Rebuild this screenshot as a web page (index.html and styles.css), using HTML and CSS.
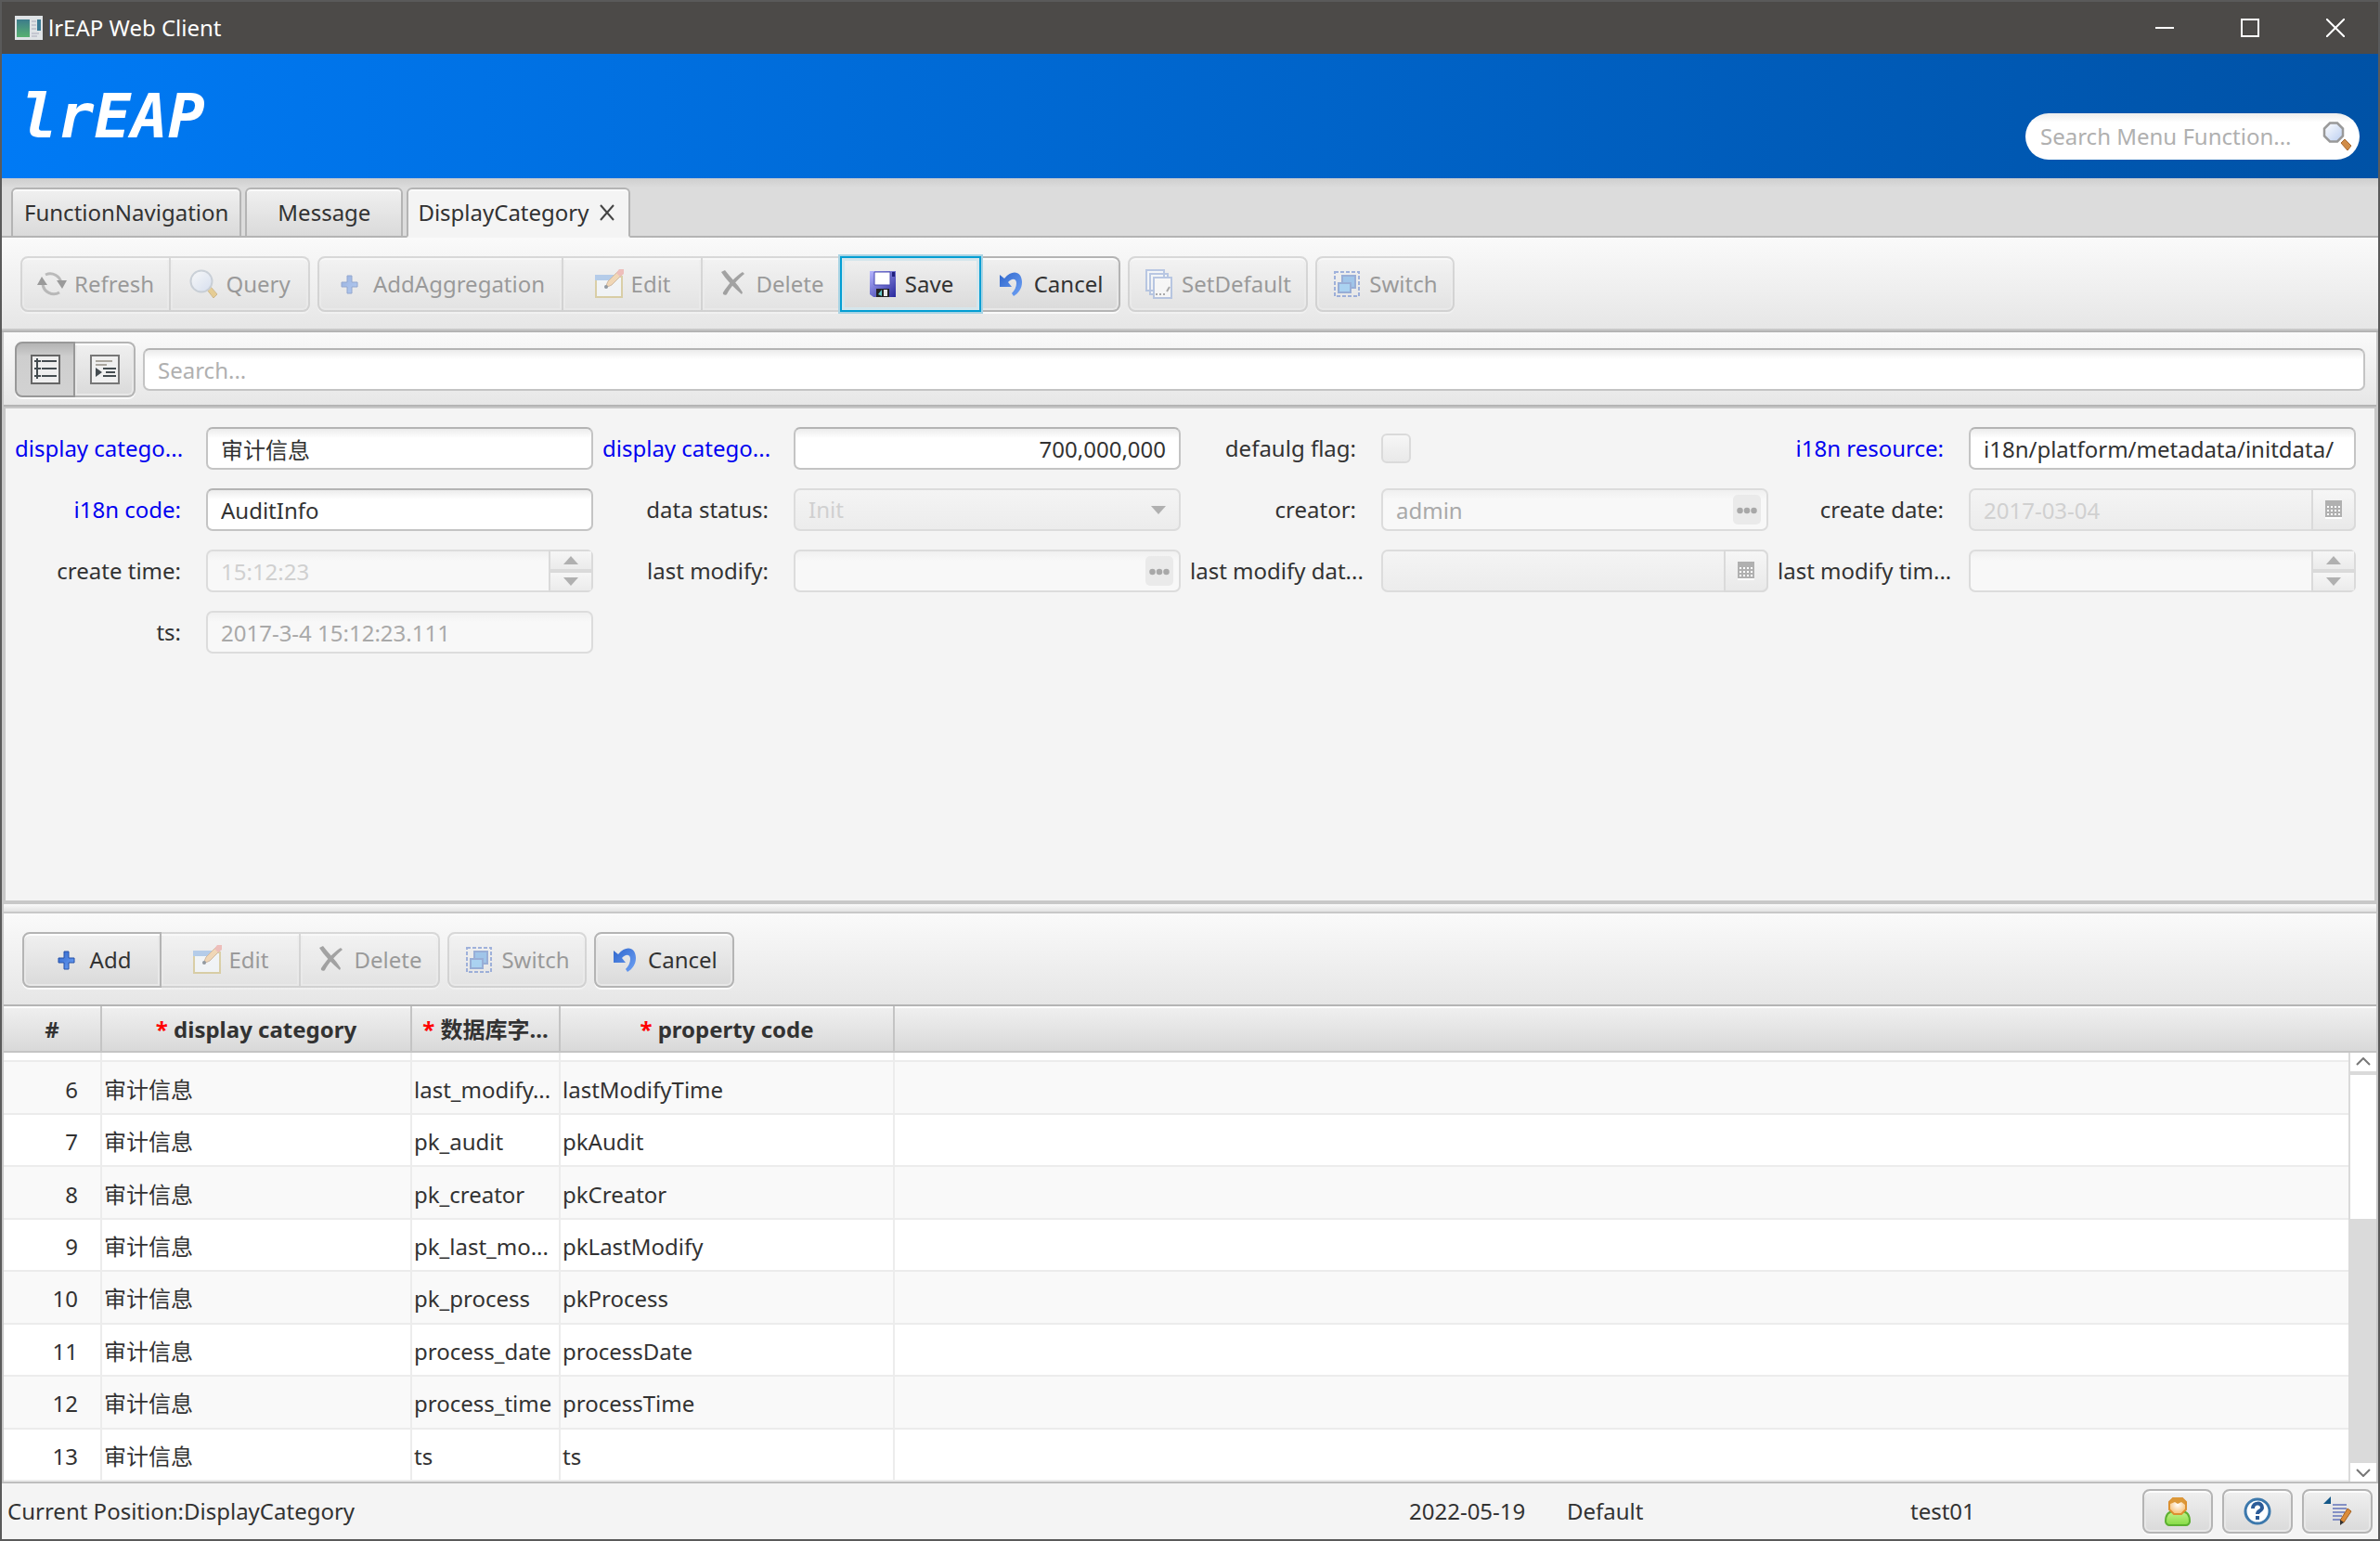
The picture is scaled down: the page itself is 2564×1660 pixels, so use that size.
FILE: index.html
```html
<!DOCTYPE html>
<html lang="en">

<head>
    <meta charset="UTF-8">
    <meta name="viewport" content="width=device-width, initial-scale=1.0">
    <title>lrEAP Web Client</title>
    <link rel="stylesheet" href="styles.css">
</head>

<body>

    <!-- shared icons -->
    <svg class="sprite" aria-hidden="true">
        <defs>
            <linearGradient id="glass" x1="0" y1="0" x2="1" y2="1">
                <stop offset="0" stop-color="#fff" />
                <stop offset="1" stop-color="#b9cdf0" />
            </linearGradient>
            <linearGradient id="disk" x1="0" y1="0" x2="1" y2="1">
                <stop offset="0" stop-color="#b5b5ff" />
                <stop offset="1" stop-color="#28289c" />
            </linearGradient>
            <linearGradient id="blue" x1="0" y1="0" x2="1" y2="1">
                <stop offset="0" stop-color="#2f66cc" />
                <stop offset="1" stop-color="#6fa2f5" />
            </linearGradient>
            <linearGradient id="sea" x1="0" y1="0" x2="0" y2="1">
                <stop offset="0" stop-color="#3c7c8c" />
                <stop offset="1" stop-color="#58b070" />
            </linearGradient>
            <radialGradient id="face" cx="0.5" cy="0.4">
                <stop offset="0" stop-color="#fff" />
                <stop offset="1" stop-color="#f8c888" />
            </radialGradient>
            <linearGradient id="shirt" x1="0" y1="0" x2="0" y2="1">
                <stop offset="0" stop-color="#c8f08c" />
                <stop offset="1" stop-color="#84dc44" />
            </linearGradient>
        </defs>
        <symbol id="i-refresh" viewBox="0 0 32 32">
            <path d="M9 6a12 12 0 0 1 17 9M24 25a12 12 0 0 1-18-9" fill="none" stroke="#777" stroke-width="3" />
            <path d="M0 17l5-9 6 9zM21 12h11l-5 9z" fill="#333" />
        </symbol>
        <symbol id="i-query" viewBox="0 0 32 32">
            <path d="M20 22l4-3 7 8-4 4z" fill="#dca528" stroke="#a87818" />
            <circle cx="14" cy="13" r="11.500" fill="url(#glass)" stroke="#9aa8b8" stroke-width="2" />
        </symbol>
        <symbol id="i-find" viewBox="0 0 32 32">
            <path d="M20 23l4-4 7 7-4 5z" fill="#d08c48" stroke="#a86830" />
            <path d="M8 1.500h8l6 6v8l-6 6H8l-6-6v-8z" fill="url(#glass)" stroke="#999" stroke-width="2.500" />
        </symbol>
        <symbol id="i-plus" viewBox="0 0 32 32">
            <path d="M12 7h5v7h6v5h-6v7h-5v-7H6v-5h6z" fill="url(#blue)" stroke="#2450a8" />
        </symbol>
        <symbol id="i-edit" viewBox="0 0 32 32">
            <path d="M2 8h28v22H2z" fill="#f4faff" stroke="#c0a850" stroke-width="2" />
            <path d="M1 6h22v6H1z" fill="#6ca0e0" />
            <path d="M12 20l3-7L27 1l4 4-12 12z" fill="#f0b870" stroke="#a87848" />
            <path d="M24 4l3-4h5v5l-4 3z" fill="#e88078" />
            <circle cx="13" cy="19" r="2" fill="#234" />
        </symbol>
        <symbol id="i-delete" viewBox="0 0 32 32">
            <path d="M2 3l4-2c7 9 13 14 19 24l-1 2C16 20 7 11 2 3z" fill="#444" />
            <path d="M4 25C9 17 17 8 25 3l2 2C20 11 12 19 8 27c-2 2-5 0-4-2z" fill="#444" />
        </symbol>
        <symbol id="i-save" viewBox="0 0 32 32">
            <path d="M2 2h28v28H6l-4-3z" fill="url(#disk)" />
            <path d="M7 3h17v14H7z" fill="#fff" stroke="#4848b0" />
            <path d="M26 3h3v5h-3z" fill="#20207c" />
            <path d="M9 21h14v9H9z" fill="#222" />
            <path d="M17 22h4v7h-4z" fill="#e8e8e8" />
            <path d="M11 27l4-5v7z" fill="#6cc" />
        </symbol>
        <symbol id="i-undo" viewBox="0 0 32 32">
            <path d="M3 6v13h13l-4-5c3-4 9-5 9 1 0 4-2 8-5 11l2 3c5-3 9-8 9-15C27 3 17-1 8 10z" fill="url(#blue)" />
        </symbol>
        <symbol id="i-pages" viewBox="0 0 32 32">
            <g fill="#f6faff" stroke="#7494d0" stroke-width="2">
                <path d="M2 1h19v22H2zM6 5h19v22H6z" />
                <path d="M10 9h19v22H10z" fill="#fff" />
            </g>
            <path d="M12 27h2m2 0h2m2 0h2m2-3l3-5" stroke="#555" stroke-width="2" />
        </symbol>
        <symbol id="i-switch" viewBox="0 0 32 32">
            <path d="M3 3h26v26H3z" fill="none" stroke="#3c64c0" stroke-width="2" stroke-dasharray="4 2" />
            <path d="M11 7h14v13H11z" fill="#4090e0" stroke="#3060b8" stroke-width="2" />
            <path d="M7 15h13v10H7z" fill="#58b0f4" stroke="#3060b8" stroke-width="2" />
        </symbol>
        <symbol id="i-dots" viewBox="0 0 32 32">
            <circle cx="8" cy="17" r="3.500" />
            <circle cx="16" cy="17" r="3.500" />
            <circle cx="24" cy="17" r="3.500" />
        </symbol>
        <symbol id="i-calendar" viewBox="0 0 18 20">
            <path d="M0 0h18v18H0z" fill="#b0b0b0" />
            <path d="M0 19h18" stroke="#fff" stroke-width="2" />
            <path d="M2 7h14M2 11h14M2 15h14" stroke="#fff" stroke-width="2" stroke-dasharray="2 2" />
        </symbol>
        <symbol id="i-up" viewBox="0 0 16 10">
            <path d="M0 9l8-9 8 9z" fill="#b0b0b0" />
        </symbol>
        <symbol id="i-down" viewBox="0 0 16 10">
            <path d="M0 0h16L8 9z" fill="#b0b0b0" />
        </symbol>
    </svg>

    <div class="window">
        <header class="titlebar">
            <svg class="app-icon" viewBox="0 0 30 26">
                <path d="M0 0h30v26H0z" fill="#dfe3e6" />
                <path d="M2 4h14v19H2z" fill="url(#sea)" />
                <path d="M24 4h4v12h-4z" fill="#3a7a94" />
                <path d="M18 6h5M18 10h5M18 14h5M18 19h8M18 22h6" stroke="#aab" />
            </svg>
            <span class="window-title">lrEAP Web Client</span>
            <button class="window-button" aria-label="Minimize"><svg viewBox="0 0 20 20"><path d="M0 10h20" /></svg></button>
            <button class="window-button" aria-label="Maximize"><svg viewBox="0 0 20 20"><path d="M1 1h18v18H1z" /></svg></button>
            <button class="window-button" aria-label="Close"><svg viewBox="0 0 20 20"><path d="M0 0l20 20M20 0L0 20" /></svg></button>
        </header>

        <div class="banner">
            <h1 class="logo">lrEAP</h1>
            <div class="menu-search">
                <input type="text" aria-label="Search menu" placeholder="Search Menu Function...">
                <svg class="icon"><use href="#i-find" /></svg>
            </div>
        </div>

        <nav class="tabs">
            <button class="tab">FunctionNavigation</button>
            <button class="tab tab-wide">Message</button>
            <button class="tab active">DisplayCategory
                <svg class="tab-close" viewBox="0 0 16 18"><path d="M1 1l14 16M15 1L1 17" /></svg>
            </button>
        </nav>

        <div class="toolbar">
            <div class="group">
                <button class="button" disabled><svg class="icon"><use href="#i-refresh" /></svg>Refresh</button>
                <button class="button" disabled><svg class="icon"><use href="#i-query" /></svg>Query</button>
            </div>
            <div class="group">
                <button class="button wide" disabled><svg class="icon"><use href="#i-plus" /></svg>AddAggregation</button>
                <button class="button" disabled><svg class="icon"><use href="#i-edit" /></svg>Edit</button>
                <button class="button" disabled><svg class="icon"><use href="#i-delete" /></svg>Delete</button>
                <button class="button focused"><svg class="icon"><use href="#i-save" /></svg>Save</button>
                <button class="button"><svg class="icon"><use href="#i-undo" /></svg>Cancel</button>
            </div>
            <div class="group">
                <button class="button" disabled><svg class="icon"><use href="#i-pages" /></svg>SetDefault</button>
            </div>
            <div class="group">
                <button class="button" disabled><svg class="icon"><use href="#i-switch" /></svg>Switch</button>
            </div>
        </div>

        <main class="content">
            <div class="search-row">
                <div class="group">
                    <button class="button toggle selected" aria-label="List view">
                        <svg class="icon" viewBox="0 0 32 32">
                            <path d="M1 1h30v30H1z" fill="#eee" stroke="#666" stroke-width="2" />
                            <path d="M12 7h16M12 15h16M12 23h16M4 7h7M4 15h7M4 23h7M7 4v22" stroke="#444c50" stroke-width="2" />
                        </svg>
                    </button>
                    <button class="button toggle" aria-label="Outline view">
                        <svg class="icon" viewBox="0 0 32 32">
                            <path d="M1 1h30v30H1z" fill="#f0f0f0" stroke="#777" stroke-width="2" />
                            <path d="M6 7h18M6 11h12" stroke="#aaa69e" stroke-width="2" />
                            <path d="M14 15h14M17 19h10M14 23h14" stroke="#444c50" stroke-width="2" />
                            <path d="M6 14l7 5-7 5z" fill="#444c50" />
                        </svg>
                    </button>
                </div>
                <input class="field" type="text" aria-label="Search" placeholder="Search...">
            </div>

            <form class="form">
                <div class="item">
                    <label class="required cut" for="name">display catego...</label>
                    <input class="field" type="text" id="name" value="审计信息">
                </div>
                <div class="item">
                    <label class="required cut" for="order">display catego...</label>
                    <input class="field number" type="text" id="order" value="700,000,000">
                </div>
                <div class="item">
                    <label for="flag">defaulg flag:</label>
                    <input class="check" type="checkbox" id="flag" disabled>
                </div>
                <div class="item">
                    <label class="required" for="resource">i18n resource:</label>
                    <input class="field" type="text" id="resource" value="i18n/platform/metadata/initdata/">
                </div>
                <div class="item">
                    <label class="required" for="code">i18n code:</label>
                    <input class="field" type="text" id="code" value="AuditInfo">
                </div>
                <div class="item">
                    <label for="status">data status:</label>
                    <div class="combo">
                        <select class="field faint" id="status" disabled>
                            <option>Init</option>
                        </select>
                        <svg class="arrow"><use href="#i-down" /></svg>
                    </div>
                </div>
                <div class="item">
                    <label for="creator">creator:</label>
                    <div class="combo">
                        <input class="field" type="text" id="creator" value="admin" disabled>
                        <button class="pick" type="button" aria-label="Choose creator" disabled><svg><use href="#i-dots" /></svg></button>
                    </div>
                </div>
                <div class="item">
                    <label for="createDate">create date:</label>
                    <div class="combo">
                        <input class="field faint shaded" type="text" id="createDate" value="2017-03-04" disabled>
                        <button class="side" type="button" aria-label="Choose date" disabled><svg class="calendar"><use href="#i-calendar" /></svg></button>
                    </div>
                </div>
                <div class="item">
                    <label for="createTime">create time:</label>
                    <div class="combo">
                        <input class="field faint" type="text" id="createTime" value="15:12:23" disabled>
                        <div class="spinner">
                            <button type="button" aria-label="Later" disabled><svg class="arrow"><use href="#i-up" /></svg></button>
                            <button type="button" aria-label="Earlier" disabled><svg class="arrow"><use href="#i-down" /></svg></button>
                        </div>
                    </div>
                </div>
                <div class="item">
                    <label for="modifier">last modify:</label>
                    <div class="combo">
                        <input class="field" type="text" id="modifier" disabled>
                        <button class="pick" type="button" aria-label="Choose user" disabled><svg><use href="#i-dots" /></svg></button>
                    </div>
                </div>
                <div class="item">
                    <label class="cut" for="modifyDate">last modify dat...</label>
                    <div class="combo">
                        <input class="field shaded" type="text" id="modifyDate" disabled>
                        <button class="side" type="button" aria-label="Choose date" disabled><svg class="calendar"><use href="#i-calendar" /></svg></button>
                    </div>
                </div>
                <div class="item">
                    <label class="cut" for="modifyTime">last modify tim...</label>
                    <div class="combo">
                        <input class="field" type="text" id="modifyTime" disabled>
                        <div class="spinner">
                            <button type="button" aria-label="Later" disabled><svg class="arrow"><use href="#i-up" /></svg></button>
                            <button type="button" aria-label="Earlier" disabled><svg class="arrow"><use href="#i-down" /></svg></button>
                        </div>
                    </div>
                </div>
                <div class="item">
                    <label for="ts">ts:</label>
                    <input class="field" type="text" id="ts" value="2017-3-4 15:12:23.111" disabled>
                </div>
            </form>

            <div class="splitter"></div>

            <div class="toolbar detail">
                <div class="group">
                    <button class="button"><svg class="icon"><use href="#i-plus" /></svg>Add</button>
                    <button class="button" disabled><svg class="icon"><use href="#i-edit" /></svg>Edit</button>
                    <button class="button" disabled><svg class="icon"><use href="#i-delete" /></svg>Delete</button>
                </div>
                <div class="group">
                    <button class="button" disabled><svg class="icon"><use href="#i-switch" /></svg>Switch</button>
                </div>
                <div class="group">
                    <button class="button"><svg class="icon"><use href="#i-undo" /></svg>Cancel</button>
                </div>
            </div>

            <table class="grid grid-head">
                <colgroup>
                    <col class="c-num"><col class="c-cat"><col class="c-field"><col class="c-code"><col>
                </colgroup>
                <thead>
                    <tr>
                        <th>#</th>
                        <th><span class="star">*</span> display category</th>
                        <th><span class="star">*</span> 数据库字...</th>
                        <th><span class="star">*</span> property code</th>
                        <th></th>
                    </tr>
                </thead>
            </table>
            <div class="grid-area">
                <div class="grid-view">
                    <table class="grid grid-body">
                        <colgroup>
                            <col class="c-num"><col class="c-cat"><col class="c-field"><col class="c-code"><col>
                        </colgroup>
                        <tbody>
                            <tr><td></td><td></td><td>last_modify...</td><td></td><td></td></tr>
                            <tr><td>6</td><td>审计信息</td><td>last_modify...</td><td>lastModifyTime</td><td></td></tr>
                            <tr><td>7</td><td>审计信息</td><td>pk_audit</td><td>pkAudit</td><td></td></tr>
                            <tr><td>8</td><td>审计信息</td><td>pk_creator</td><td>pkCreator</td><td></td></tr>
                            <tr><td>9</td><td>审计信息</td><td>pk_last_mo...</td><td>pkLastModify</td><td></td></tr>
                            <tr><td>10</td><td>审计信息</td><td>pk_process</td><td>pkProcess</td><td></td></tr>
                            <tr><td>11</td><td>审计信息</td><td>process_date</td><td>processDate</td><td></td></tr>
                            <tr><td>12</td><td>审计信息</td><td>process_time</td><td>processTime</td><td></td></tr>
                            <tr><td>13</td><td>审计信息</td><td>ts</td><td>ts</td><td></td></tr>
                        </tbody>
                    </table>
                </div>
                <div class="scrollbar">
                    <button aria-label="Scroll up"><svg viewBox="0 0 16 9"><path d="M1 8l7-7 7 7" /></svg></button>
                    <div class="track"><div class="thumb"></div></div>
                    <button aria-label="Scroll down"><svg viewBox="0 0 16 9"><path d="M1 1l7 7 7-7" /></svg></button>
                </div>
            </div>
        </main>

        <footer class="status">
            <span class="position">Current Position:DisplayCategory</span>
            <span class="date">2022-05-19</span>
            <span class="theme">Default</span>
            <span class="user">test01</span>
            <div class="status-buttons">
                <button class="button small" aria-label="User">
                    <svg class="icon" viewBox="0 0 32 32">
                        <path d="M3 27c0-8 4-11 9-11h8c5 0 9 3 9 11 0 2-2 4-4 4H7c-2 0-4-2-4-4z" fill="url(#shirt)" stroke="#5cb030" stroke-width="2" />
                        <path d="M11 2h10l4 4v8l-5 5h-8l-5-5V6z" fill="url(#face)" stroke="#dc9030" stroke-width="2" />
                        <path d="M8 8V5l4-4h8l4 4v4l-4-3-4 2-3-2z" fill="#dc9838" />
                    </svg>
                </button>
                <button class="button small" aria-label="Help">
                    <svg class="icon" viewBox="0 0 32 32">
                        <circle cx="16" cy="16" r="13" fill="#fff" stroke="#3c78ac" stroke-width="3" />
                        <path d="M11 13c0-7 10-7 10-1 0 4-5 3-5 7" fill="none" stroke="#2c5c98" stroke-width="4" />
                        <path d="M14 21h4v4h-4z" fill="#2c5c98" />
                    </svg>
                </button>
                <button class="button small" aria-label="Notes">
                    <svg class="icon" viewBox="0 0 32 32">
                        <path d="M1 8l8-8v8z" fill="#145888" />
                        <path d="M11 9h15M11 13h15M11 17h13M11 21h10M11 25h9" stroke="#8490c4" stroke-width="2" />
                        <path d="M27 13l4 3-8 12-4-2z" fill="#dc8c38" stroke="#a46020" />
                        <path d="M19 25l4 3-4 3z" fill="#333" />
                    </svg>
                </button>
            </div>
        </footer>
    </div>

</body>

</html>
```
FILE: styles.css
```css
* {
    box-sizing: border-box;
}

body {
    margin: 0;
    font-family: "Noto Sans", "Noto Sans CJK SC", sans-serif;
    font-size: 24px;
    line-height: 32px;
    color: #323232;
}

button,
input,
select {
    font: inherit;
    color: inherit;
    margin: 0;
}

button {
    padding: 0;
    border: none;
    background: none;
}

.sprite {
    position: absolute;
    width: 0;
    height: 0;
}

.icon {
    width: 32px;
    height: 32px;
    flex: none;
}

.window {
    height: 100vh;
    display: flex;
    flex-direction: column;
    border: 2px solid #5a5a5a;
    background-color: #f4f4f4;
}

/* title bar */
.titlebar {
    display: flex;
    align-items: center;
    height: 56px;
    flex: none;
    padding-left: 14px;
    background-color: #4c4a48;
    color: #fff;
}

.app-icon {
    width: 30px;
    height: 26px;
    margin-right: 6px;
}

.window-title {
    flex: 1;
}

.window-button {
    width: 92px;
    height: 54px;
}

.window-button svg {
    width: 20px;
    height: 20px;
    display: block;
    margin: auto;
    fill: none;
    stroke: #fff;
    stroke-width: 2;
}

/* banner */
.banner {
    display: flex;
    justify-content: space-between;
    align-items: flex-end;
    height: 134px;
    flex: none;
    padding: 0 20px 20px 20px;
    background: linear-gradient(to right, #007af5, #0052a6);
}

.logo {
    margin: 0;
    color: #fff;
    font: italic bold 66px/92px "DejaVu Sans Mono", monospace;
}

.menu-search {
    display: flex;
    align-items: center;
    width: 360px;
    height: 50px;
    padding: 0 8px 0 16px;
    border-radius: 25px;
    background: linear-gradient(#ececec, #fff 10px);
}

.menu-search input {
    flex: 1;
    min-width: 0;
    padding: 0;
    border: none;
    background: none;
    outline: none;
}

::placeholder {
    color: #b0b0b0;
    opacity: 1;
}

/* tabs */
.tabs {
    display: flex;
    align-items: flex-end;
    gap: 4px;
    height: 64px;
    flex: none;
    padding: 0 10px;
    background: linear-gradient(#cecece, #dcdcdc 10px);
    box-shadow: inset 0 -2px #b4b4b4;
}

.tab {
    display: flex;
    align-items: center;
    justify-content: center;
    height: 54px;
    padding: 0 12px;
    border: 2px solid #b4b4b4;
    border-radius: 6px 6px 0 0;
    background: linear-gradient(#f0f0f0, #dadada);
    box-shadow: inset 0 2px #fafafa;
}

.tab-wide {
    min-width: 170px;
}

.tab.active {
    padding: 0 14px 0 10px;
    border-bottom-color: #f4f4f4;
    background: #f4f4f4;
}

.tab-close {
    width: 18px;
    height: 18px;
    margin-left: 10px;
    fill: none;
    stroke: #444;
    stroke-width: 2;
}

/* toolbars */
.toolbar {
    display: flex;
    gap: 8px;
    flex: none;
    height: 102px;
    padding: 20px 20px;
    border-bottom: 2px solid #b4b4b4;
    background: linear-gradient(#fafafa, #e6e6e6);
    box-shadow: inset 0 -2px #c8c8c8;
}

.toolbar.detail {
    height: 100px;
    box-shadow: none;
}

.group {
    display: flex;
    flex: none;
}

.button {
    display: flex;
    align-items: center;
    justify-content: center;
    gap: 8px;
    min-width: 150px;
    height: 60px;
    padding: 0 16px;
    border: 2px solid #b4b4b4;
    background: linear-gradient(#f0f0f0, #dadada);
    box-shadow: inset 0 2px #fcfcfc, inset 0 0 0 2px #e8e8e8, 0 2px #fafafa;
}

.button + .button {
    border-left: none;
}

.button:first-child {
    border-top-left-radius: 8px;
    border-bottom-left-radius: 8px;
}

.button:last-child {
    border-top-right-radius: 8px;
    border-bottom-right-radius: 8px;
}

.button:disabled {
    opacity: 0.45;
}

.button.wide {
    min-width: 265px;
}

.button.focused {
    z-index: 1;
    min-width: 152px;
    margin-left: -2px;
    border: 2px solid #039ed3;
    box-shadow: inset 0 0 0 3px #d5e6ec, 0 0 0 2px #a9d4e4;
}

.button.toggle {
    min-width: 65px;
    padding: 0;
}

.button.selected {
    border-color: #989898;
    background: linear-gradient(#b4b4b4, #cecece 14px, #d2d2d2);
    box-shadow: 0 2px #fafafa;
}

/* content */
.content {
    display: flex;
    flex-direction: column;
    flex: 1;
    min-height: 0;
    border: solid #c8c8c8;
    border-width: 0 2px;
}

.search-row {
    display: flex;
    align-items: center;
    gap: 8px;
    flex: none;
    height: 82px;
    padding: 0 12px;
    border-bottom: 2px solid #c8c8c8;
    background: linear-gradient(#fafafa, #e6e6e6);
    box-shadow: inset 0 -2px #b4b4b4;
}

.field {
    flex: 1;
    width: 100%;
    min-width: 0;
    height: 46px;
    padding: 0 14px;
    border: 2px solid #c4c4c4;
    border-top-color: #b4b4b4;
    border-radius: 7px;
    background: linear-gradient(#ececec, #fff 10px);
    outline: none;
}

.field.number {
    text-align: right;
}

.field:disabled {
    border-color: #dcdcdc;
    background: linear-gradient(#f0f0f0, #f8f8f8 10px);
    color: #a9a9a9;
    opacity: 1;
}

.field.faint:disabled {
    color: #d0d0d0;
}

.field.shaded:disabled,
select.field:disabled {
    background: linear-gradient(#f4f4f4, #ececec);
}

select.field {
    appearance: none;
}

/* form */
.form {
    display: grid;
    grid-template-columns: repeat(4, 1fr);
    align-content: start;
    gap: 20px 10px;
    flex: 491 1 0;
    min-height: 0;
    padding: 20px 20px 20px 10px;
    border: solid #c8c8c8;
    border-width: 0 2px;
    background-color: #f4f4f4;
}

.item {
    display: flex;
    align-items: center;
    height: 46px;
}

.item label {
    width: 206px;
    flex: none;
    padding-right: 27px;
    text-align: right;
    white-space: nowrap;
}

.item label.cut {
    padding-right: 0;
    text-align: left;
}

.required {
    color: #0000f0;
}

.check {
    appearance: none;
    width: 32px;
    height: 32px;
    border: 2px solid #dadada;
    border-radius: 6px;
    background: linear-gradient(#f6f6f6, #e9e9e9);
}

.combo {
    position: relative;
    display: flex;
    flex: 1;
    min-width: 0;
}

.arrow {
    width: 16px;
    height: 10px;
}

/* drop-down arrow and side buttons sit over the field */
.combo > .arrow {
    position: absolute;
    right: 16px;
    top: 19px;
}

.pick {
    position: absolute;
    right: 8px;
    top: 7px;
    width: 30px;
    height: 32px;
    border-radius: 5px;
    background-color: #eaeaea;
}

.pick svg {
    display: block;
    width: 30px;
    height: 32px;
    fill: #a8a8a8;
}

.side,
.spinner {
    position: absolute;
    right: 0;
    top: 0;
    width: 48px;
    height: 46px;
    border: 2px solid #dadada;
    border-radius: 0 7px 7px 0;
    background: linear-gradient(#f6f6f6, #e9e9e9);
}

.spinner {
    display: flex;
    flex-direction: column;
    justify-content: space-between;
    background: #dadada;
}

.spinner button {
    display: flex;
    align-items: center;
    justify-content: center;
    height: 19px;
    background: linear-gradient(#f6f6f6, #ebebeb);
}

.calendar {
    display: block;
    width: 18px;
    height: 20px;
    margin: auto;
}

.splitter {
    flex: none;
    height: 14px;
    border: solid #c8c8c8;
    border-width: 4px 0 2px;
    background: linear-gradient(#fafafa, #e2e2e2);
}

/* table */
.grid {
    width: 100%;
    table-layout: fixed;
    border-collapse: separate;
    border-spacing: 0;
    flex: none;
}

.c-num {
    width: 106px;
}

.c-cat {
    width: 334px;
}

.c-field {
    width: 160px;
}

.c-code {
    width: 360px;
}

.grid th {
    height: 50px;
    padding: 2px 0 0;
    border-right: 2px solid #c4c4c4;
    border-bottom: 2px solid #c4c4c4;
    background: linear-gradient(#f0f0f0, #d9d9d9);
    box-shadow: inset 0 2px #fcfcfc;
    white-space: nowrap;
}

.star {
    color: #f00;
}

.grid-area {
    display: flex;
    flex: 463 1 0;
    min-height: 0;
}

.grid-view {
    display: flex;
    flex-direction: column;
    justify-content: flex-end;
    flex: 1;
    min-width: 0;
    overflow: hidden;
    background-color: #fff;
}

.grid-body {
    height: 508px;
}

.grid td {
    padding: 4px 2px 0;
    border-right: 2px solid #ececec;
    border-bottom: 2px solid #ececec;
    white-space: nowrap;
}

.grid tr:nth-child(even) td {
    background-color: #f9f9f9;
}

.grid td:first-child {
    padding-right: 24px;
    text-align: right;
}

.grid th:last-child,
.grid td:last-child {
    border-right: none;
}

.scrollbar {
    display: flex;
    flex-direction: column;
    width: 30px;
    flex: none;
    padding-left: 2px;
    background-color: #dadada;
}

.scrollbar button {
    height: 20px;
    flex: none;
    background-color: #fff;
}

.scrollbar svg {
    display: block;
    width: 16px;
    height: 9px;
    margin: auto;
    fill: none;
    stroke: #777;
    stroke-width: 2;
}

.track {
    flex: 1;
    padding-top: 4px;
}

.thumb {
    height: 37%;
    background-color: #fff;
}

/* status bar */
.status {
    display: flex;
    align-items: center;
    flex: none;
    height: 62px;
    padding: 0 6px;
    border-top: 2px solid #bebebe;
}

.position {
    flex: 1;
}

.date {
    width: 170px;
}

.theme {
    width: 370px;
}

.user {
    width: 250px;
}

.status-buttons {
    display: flex;
    gap: 10px;
}

.button.small {
    min-width: 76px;
    height: 48px;
    border: 2px solid #b4b4b4;
    border-radius: 8px;
}
```
